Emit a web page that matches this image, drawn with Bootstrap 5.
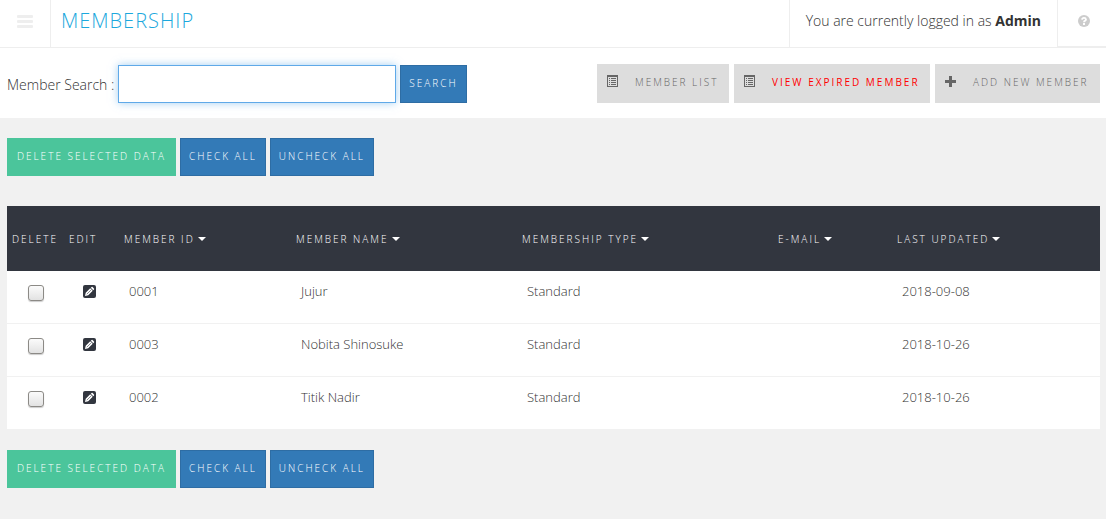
<!DOCTYPE html>
<html lang="en">
<head>
<meta charset="utf-8">
<meta name="viewport" content="width=device-width, initial-scale=1">
<title>Membership</title>
<link href="https://cdn.jsdelivr.net/npm/bootstrap@5.3.0/dist/css/bootstrap.min.css" rel="stylesheet">
<style>
body { background: #f1f1f1; color: #333; font-family: "Open Sans", sans-serif; font-size: 14px; font-weight: 300; line-height: 20px; }
svg { display: block; }
.topbar { height: 48px; border-bottom: 1px solid #eee; }
.menu-toggle { width: 51px; padding: 0 0 4px; border: 0; border-right: 1px solid #eee; background: none; color: #eee; }
.page-title { margin: 0; padding: 9px 10px 0; font-size: 20px; line-height: 24px; font-weight: 300; letter-spacing: 1px; color: #1ca8dd; }
.user-note { padding: 11px 16px 0; border-left: 1px solid #eee; }
.user-note strong { font-weight: 700; }
.help-link { width: 49px; padding: 15px 0 0 20px; border-left: 1px solid #eee; border-bottom: 1px solid #eee; color: #ccc; }
.search-band { padding: 16px 6px 15px 7px; }
.search-band label { padding-top: 2px; }
.search-box { width: 278px; height: 38px; padding: 6px 12px; border: 1px solid #5fa9e8; border-radius: 0; font-size: 14px; }
.search-box, .search-box:focus { border-color: #5fa9e8; box-shadow: 0 0 8px rgba(102, 175, 233, .6); }
.page-links { gap: 5px; }
.tile-btn { --bs-btn-border-radius: 0; --bs-btn-padding-x: 8px; --bs-btn-font-size: 10px; --bs-btn-line-height: 20px; --bs-btn-font-weight: 300; padding-top: 7px; padding-bottom: 9px; letter-spacing: 2px; text-transform: uppercase; white-space: nowrap; }
.tile-blue { --bs-btn-color: #fff; --bs-btn-bg: #337ab7; --bs-btn-border-color: #2e6da4; --bs-btn-hover-color: #fff; --bs-btn-hover-bg: #286090; }
.tile-green { --bs-btn-color: #fff; --bs-btn-bg: #4bc59b; --bs-btn-border-color: #4bc59b; --bs-btn-hover-color: #fff; --bs-btn-hover-bg: #3db389; min-width: 169px; }
.tile-grey { --bs-btn-color: #666; --bs-btn-bg: #ddd; --bs-btn-border-color: #ddd; --bs-btn-hover-bg: #ccc; padding-left: 9px; padding-bottom: 10px; display: inline-flex; gap: 17px; min-width: 132px; }
.tile-grey svg { margin-top: 3px; color: #666; }
.tile-red { --bs-btn-color: #f00; --bs-btn-hover-color: #f00; --bs-btn-font-weight: 400; min-width: 196px; }
.tile-add { min-width: 165px; }
.content-area { padding: 20px 6px 30px 7px; }
.members { width: 100%; table-layout: fixed; border-collapse: separate; border-spacing: 0; margin: 30px 0 21px; background: #fff; }
.members th { height: 65px; padding: 0 5px; background: #32363f; color: #fff; font-size: 10px; font-weight: 300; letter-spacing: 2px; white-space: nowrap; }
.members th a { color: inherit; text-decoration: none; }
.sort-mark { display: inline-block; vertical-align: 2px; border-top: 4px solid #fff; border-left: 4px solid transparent; border-right: 4px solid transparent; margin-left: 3px; }
.members td { height: 53px; padding: 10px 10px 0; vertical-align: top; font-size: 13px; border-bottom: 1px solid #f1f1f1; }
.members tbody tr:last-child td { height: 52px; border-bottom: 0; }
.members td.pick-cell { padding: 14px 0 0 21px; }
.members td.edit-cell { padding: 14px 0 0 19px; }
.edit-cell a { display: block; width: 13px; color: #32363f; }
.col-pick { width: 57px; } .col-edit { width: 55px; } .col-id { width: 172px; } .col-name { width: 226px; }
.col-type { width: 256px; } .col-mail { width: 119px; } .col-date { width: 208px; }
.pick-box { appearance: none; display: block; width: 16px; height: 16px; margin: 0; border: 1px solid #8c8a86; border-radius: 3px; background: linear-gradient(#fbfbfb, #e2e2e2); box-shadow: 0 1px 1px rgba(0, 0, 0, .2); }
.pick-box:checked { background: #337ab7; }
</style>
</head>
<body>
<svg class="d-none" aria-hidden="true">
  <symbol id="i-list" viewBox="0 0 11 12"><path fill="currentColor" fill-rule="evenodd" d="M0 0h11v12H0zM1 2v9h9V2zM2 3h1v1H2zm2 0h5v1H4zM2 5h1v1H2zm2 0h5v1H4zM2 7h1v1H2zm2 0h5v1H4zM2 9h1v1H2zm2 0h5v1H4z"/></symbol>
  <symbol id="i-edit" viewBox="0 0 13 13"><rect width="13" height="13" rx="2" fill="currentColor"/><path fill="#fff" d="M2 11l.7-3.200 4.500-4.500 2.500 2.500-4.500 4.500zM7.800 2.700l.8-.7q.5-.4 1 0l1.400 1.400q.4.5 0 1l-.7.8z"/><path stroke="#32363f" stroke-width=".6" d="M3.800 9.200l4.100-4.100"/></symbol>
</svg>

<header class="topbar bg-white d-flex">
  <button type="button" class="menu-toggle d-flex align-items-center justify-content-center" aria-label="Menu">
    <svg width="16" height="14" viewBox="0 0 16 14" fill="currentColor"><rect y="0" width="16" height="3" rx="1"/><rect y="5" width="16" height="3" rx="1"/><rect y="10" width="16" height="3" rx="1"/></svg>
  </button>
  <h1 class="page-title">MEMBERSHIP</h1>
  <div class="user-note ms-auto">You are currently logged in as <strong>Admin</strong></div>
  <a href="#help" class="help-link" aria-label="Help">
    <svg width="12" height="12" viewBox="0 0 12 12"><circle cx="6" cy="6" r="6" fill="currentColor"/><path d="M4 4.600Q4.200 2.800 6 2.800T8 4.500Q8 5.400 6.900 5.900 6 6.300 6 7.200" fill="none" stroke="#fff" stroke-width="1.800"/><rect x="5" y="8" width="2" height="2" fill="#fff"/></svg>
  </a>
</header>

<section class="search-band bg-white d-flex flex-wrap justify-content-between gap-2">
  <form class="d-flex align-items-center gap-1">
    <label for="member-search">Member Search :</label>
    <input type="text" id="member-search" class="form-control search-box">
    <button type="button" class="btn tile-btn tile-blue">Search</button>
  </form>
  <nav class="d-flex page-links" aria-label="Member pages">
    <a href="#list" class="btn tile-btn tile-grey"><svg width="11" height="12"><use href="#i-list"/></svg>Member List</a>
    <a href="#expired" class="btn tile-btn tile-grey tile-red"><svg width="11" height="12"><use href="#i-list"/></svg>View Expired Member</a>
    <a href="#new" class="btn tile-btn tile-grey tile-add"><svg width="11" height="12" viewBox="0 0 11 12"><path d="M4 1h3v4h4v3H7v4H4V8H0V5h4z" fill="currentColor"/></svg>Add New Member</a>
  </nav>
</section>

<main class="content-area">
  <div class="d-flex gap-1">
    <button type="button" class="btn tile-btn tile-green">Delete Selected Data</button>
    <button type="button" class="btn tile-btn tile-blue">Check All</button>
    <button type="button" class="btn tile-btn tile-blue">Uncheck All</button>
  </div>

  <table class="members">
    <colgroup><col class="col-pick"><col class="col-edit"><col class="col-id"><col class="col-name"><col class="col-type"><col class="col-mail"><col class="col-date"></colgroup>
    <thead>
      <tr>
        <th scope="col">DELETE</th><th scope="col">EDIT</th>
        <th scope="col"><a href="#id">MEMBER ID<span class="sort-mark"></span></a></th>
        <th scope="col"><a href="#name">MEMBER NAME<span class="sort-mark"></span></a></th>
        <th scope="col"><a href="#type">MEMBERSHIP TYPE<span class="sort-mark"></span></a></th>
        <th scope="col"><a href="#mail">E-MAIL<span class="sort-mark"></span></a></th>
        <th scope="col"><a href="#updated">LAST UPDATED<span class="sort-mark"></span></a></th>
      </tr>
    </thead>
    <tbody>
      <tr><td class="pick-cell"><input type="checkbox" class="pick-box" aria-label="Select 0001"></td><td class="edit-cell"><a href="#e1" aria-label="Edit 0001"><svg width="13" height="13"><use href="#i-edit"/></svg></a></td><td>0001</td><td>Jujur</td><td>Standard</td><td></td><td>2018-09-08</td></tr>
      <tr><td class="pick-cell"><input type="checkbox" class="pick-box" aria-label="Select 0003"></td><td class="edit-cell"><a href="#e3" aria-label="Edit 0003"><svg width="13" height="13"><use href="#i-edit"/></svg></a></td><td>0003</td><td>Nobita Shinosuke</td><td>Standard</td><td></td><td>2018-10-26</td></tr>
      <tr><td class="pick-cell"><input type="checkbox" class="pick-box" aria-label="Select 0002"></td><td class="edit-cell"><a href="#e2" aria-label="Edit 0002"><svg width="13" height="13"><use href="#i-edit"/></svg></a></td><td>0002</td><td>Titik Nadir</td><td>Standard</td><td></td><td>2018-10-26</td></tr>
    </tbody>
  </table>

  <div class="d-flex gap-1">
    <button type="button" class="btn tile-btn tile-green">Delete Selected Data</button>
    <button type="button" class="btn tile-btn tile-blue">Check All</button>
    <button type="button" class="btn tile-btn tile-blue">Uncheck All</button>
  </div>
</main>
<script src="https://cdn.jsdelivr.net/npm/bootstrap@5.3.0/dist/js/bootstrap.bundle.min.js"></script>
</body>
</html>
